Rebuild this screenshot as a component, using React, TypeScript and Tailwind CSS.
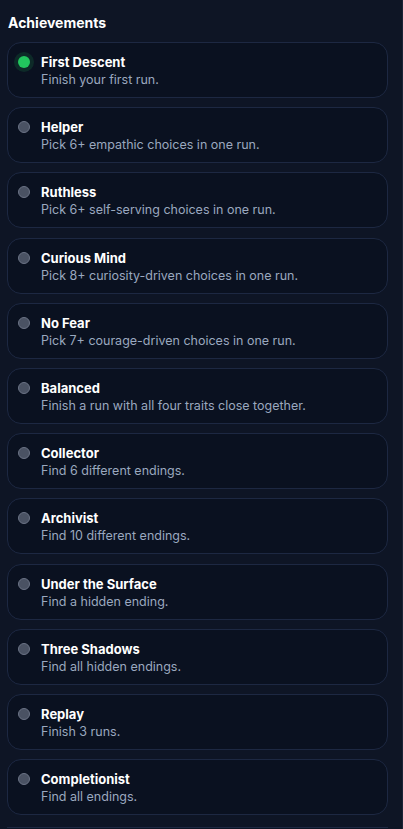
const achievements = [
  { title: "First Descent", desc: "Finish your first run.", unlocked: true },
  { title: "Helper", desc: "Pick 6+ empathic choices in one run." },
  { title: "Ruthless", desc: "Pick 6+ self-serving choices in one run." },
  { title: "Curious Mind", desc: "Pick 8+ curiosity-driven choices in one run." },
  { title: "No Fear", desc: "Pick 7+ courage-driven choices in one run." },
  { title: "Balanced", desc: "Finish a run with all four traits close together." },
  { title: "Collector", desc: "Find 6 different endings." },
  { title: "Archivist", desc: "Find 10 different endings." },
  { title: "Under the Surface", desc: "Find a hidden ending." },
  { title: "Three Shadows", desc: "Find all hidden endings." },
  { title: "Replay", desc: "Finish 3 runs." },
  { title: "Completionist", desc: "Find all endings." },
];

function AchievementCard({ title, desc, unlocked }: { title: string; desc: string; unlocked?: boolean }) {
  return (
    <div className="flex items-start gap-[11px] rounded-[14px] border border-[#1d2842] bg-[#0a1120] px-[10px] pb-[8px] pt-[10px]">
      {unlocked ? (
        <span className="mt-[3px] h-3 w-3 shrink-0 rounded-full bg-[#22c55e] shadow-[0_0_0_4px_rgba(34,197,94,0.14)]" />
      ) : (
        <span className="mt-[3px] h-3 w-3 shrink-0 rounded-full border border-[#6b7385] bg-[#4a5263]" />
      )}
      <div className="min-w-0">
        <div className="text-[13px] font-bold leading-[18px] text-white">{title}</div>
        <div className="text-[12.5px] leading-[18px] text-[#9aa8bf]">{desc}</div>
      </div>
    </div>
  );
}

export default function App() {
  return (
    <div
      className="h-[829px] w-[403px] overflow-hidden border-r border-[#1b2336] bg-[#0e1525] pl-[7px] pr-[14px] pt-[13px]"
      style={{ fontFamily: "Inter, 'Noto Sans', sans-serif" }}
    >
      <h2 className="pl-[1px] text-[14px] font-bold leading-[20px] text-white">Achievements</h2>
      <div className="mt-[9px] flex flex-col gap-[9.2px]">
        {achievements.map((a) => (
          <AchievementCard key={a.title} {...a} />
        ))}
      </div>
      <div className="mt-[12px] border-t border-[#1d2842]" />
    </div>
  );
}
